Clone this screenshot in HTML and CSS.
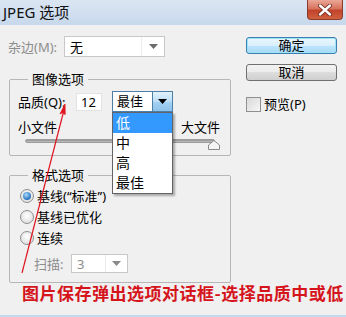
FILE: index.html
```html
<!DOCTYPE html>
<html lang="zh-CN">
<head>
    <meta charset="UTF-8">
    <title>JPEG 选项</title>
    <link rel="stylesheet" href="styles.css">
</head>
<body>

    <div class="titlebar">
        <span class="title">JPEG 选项</span>
        <span class="close-btn">
            <svg width="16" height="12" viewBox="0 0 16 12">
                <path d="M3 1.5 L13 10.5 M13 1.5 L3 10.5" stroke="#6b2418" stroke-width="4" stroke-linecap="round"/>
                <path d="M3 1.5 L13 10.5 M13 1.5 L3 10.5" stroke="#fff" stroke-width="2.4" stroke-linecap="round"/>
            </svg>
        </span>
    </div>

    <div class="dialog">
        <div class="columns">
            <div class="main">
                <div class="matte-row">
                    <span class="matte-label">杂边(M):</span>
                    <div class="combo matte-combo">
                        <span class="combo-text">无</span>
                        <span class="combo-arrow"><svg width="9" height="5" viewBox="0 0 9 5"><path d="M0 0 H9 L4.5 5 Z" fill="#6b6b6b"/></svg></span>
                    </div>
                </div>

                <!-- Image options -->
                <fieldset class="group image-group">
                    <legend>图像选项</legend>
                    <div class="quality-row">
                        <span class="quality-label">品质(Q):</span>
                        <span class="num-box">12</span>
                        <div class="quality-select">
                            <span class="qs-text">最佳</span>
                            <span class="qs-btn"><svg width="9" height="5" viewBox="0 0 9 5"><path d="M0 0 H9 L4.5 5 Z" fill="#000"/></svg></span>
                            <ul class="menu">
                                <li class="selected">低</li>
                                <li>中</li>
                                <li>高</li>
                                <li>最佳</li>
                            </ul>
                        </div>
                    </div>
                    <div class="size-labels">
                        <span>小文件</span>
                        <span>大文件</span>
                    </div>
                    <div class="slider">
                        <div class="track"></div>
                        <svg class="thumb" width="12" height="10" viewBox="0 0 12 10">
                            <path d="M0.5 9.5 V5 L6 0.5 L11.5 5 V9.5 Z" fill="#f4f4f4" stroke="#8a8a8a"/>
                        </svg>
                    </div>
                </fieldset>

                <!-- Format options -->
                <fieldset class="group format-group">
                    <legend>格式选项</legend>
                    <label class="radio-row"><span class="radio checked"></span>基线(“标准”)</label>
                    <label class="radio-row"><span class="radio"></span>基线已优化</label>
                    <label class="radio-row"><span class="radio"></span>连续</label>
                    <div class="scan-row">
                        <span class="scan-label">扫描:</span>
                        <div class="combo scan-combo">
                            <span class="combo-text">3</span>
                            <span class="combo-arrow"><svg width="9" height="5" viewBox="0 0 9 5"><path d="M0 0 H9 L4.5 5 Z" fill="#8a8a8a"/></svg></span>
                        </div>
                    </div>
                </fieldset>
            </div>

            <div class="side">
                <button class="btn btn-default">确定</button>
                <button class="btn">取消</button>
                <label class="check-row"><span class="check-box"></span>预览(P)</label>
            </div>
        </div>

        <p class="note">图片保存弹出选项对话框-选择品质中或低</p>
    </div>

    <div class="frame-bottom"></div>

    <!-- red pointer drawn over the dialog -->
    <svg class="pointer" width="346" height="317" viewBox="0 0 346 317">
        <line x1="22" y1="273" x2="64" y2="110" stroke="#e01520" stroke-width="1.2"/>
        <path d="M65 104 L60 114 L62.6 112.6 L65.2 114.6 Z" fill="#e01520" stroke="#e01520" stroke-width="0.8"/>
    </svg>

</body>
</html>
```

FILE: styles.css
```css
body {
    margin: 0;
    width: 346px;
    height: 317px;
    background-color: #f0f0f0;
    font-family: "Noto Sans", "Noto Sans CJK SC", sans-serif;
    font-size: 13px;
    line-height: 16px;
    color: #000;
    position: relative;
    overflow: hidden;
    display: flex;
    flex-direction: column;
}

/* Title bar */
.titlebar {
    height: 25px;
    flex-shrink: 0;
    display: flex;
    align-items: flex-start;
    background: linear-gradient(#dbe6f3, #c7d8ec);
}

.title {
    font-size: 15px;
    line-height: 24px;
    padding-left: 3px;
    color: #111;
}

.close-btn {
    margin-left: auto;
    margin-right: 3px;
    width: 36px;
    height: 20px;
    box-sizing: border-box;
    border: 1px solid #8b3b2d;
    border-top: none;
    border-radius: 0 0 4px 4px;
    background: linear-gradient(#eaa796, #d7735c 45%, #c2432b 55%, #d0603f);
    display: flex;
    justify-content: center;
    align-items: center;
}

/* Dialog body */
.dialog {
    padding: 11px 9px 0 9px;
}

.columns {
    display: flex;
}

.main {
    width: 222px;
}

.side {
    width: 91px;
    margin-left: 15px;
    padding-top: 1px;
    display: flex;
    flex-direction: column;
}

.matte-row {
    display: flex;
    align-items: center;
    height: 21px;
}

.matte-label {
    width: 56px;
    margin-left: -1px;
    color: #8d8d8d;
}

.combo {
    box-sizing: border-box;
    border: 1px solid #c8c8c8;
    background: #fff;
    display: flex;
    align-items: center;
}

.combo-text {
    flex: 1;
    padding-left: 5px;
}

.combo-arrow {
    width: 22px;
    height: 100%;
    border-left: 1px solid #ececec;
    display: flex;
    justify-content: center;
    align-items: center;
}

.matte-combo {
    width: 101px;
    height: 21px;
}

/* Group boxes */
.group {
    margin: 14px 0 0;
    padding: 0 8px;
    border: 1px solid #b6b6b6;
    border-radius: 2px;
    box-sizing: border-box;
    min-width: 0;
}

.group legend {
    margin-left: 10px;
    padding: 0 4px;
    line-height: 16px;
}

.image-group {
    height: 85px;
}

.format-group {
    margin-top: 11px;
    height: 116px;
}

.quality-row {
    display: flex;
    align-items: center;
    height: 21px;
    margin-top: 4px;
}

.quality-label {
    width: 58px;
}

.num-box {
    width: 26px;
    height: 18px;
    box-sizing: border-box;
    border: 1px solid #e2e2e2;
    background: #fff;
    padding-left: 4px;
    line-height: 16px;
}

.quality-select {
    position: relative;
    margin-left: 10px;
    width: 61px;
    height: 21px;
    box-sizing: border-box;
    border: 1px solid #4d7ea8;
    background: #fff;
    display: flex;
}

.qs-text {
    flex: 1;
    padding-left: 4px;
    line-height: 19px;
}

.qs-btn {
    width: 19px;
    border-left: 1px solid #4d7ea8;
    background: linear-gradient(#e3f2fc, #bcdff7 50%, #a4d2f3 50%, #8ec3ea);
    display: flex;
    justify-content: center;
    align-items: center;
}

.menu {
    position: absolute;
    top: 20px;
    left: -1px;
    width: 61px;
    margin: 0;
    padding: 0;
    list-style: none;
    background: #fff;
    border: 1px solid #646464;
    box-sizing: border-box;
    box-shadow: 2px 2px 2px rgba(0, 0, 0, 0.3);
    z-index: 3;
}

.menu li {
    height: 20px;
    line-height: 20px;
    padding-left: 3px;
    font-size: 14px;
}

.menu li.selected {
    background: #3399ff;
    color: #fff;
}

.size-labels {
    display: flex;
    justify-content: space-between;
    margin-top: 7px;
    padding-right: 2px;
}

.slider {
    position: relative;
    height: 12px;
}

.track {
    margin: 4px 7px 0;
    height: 4px;
    border-radius: 2px;
    background: linear-gradient(#8f8f8f, #c4c4c4);
    border: 1px solid #9c9c9c;
    box-sizing: border-box;
}

.thumb {
    position: absolute;
    left: 190px;
    top: 1px;
}

/* Radios */
.radio-row {
    display: flex;
    align-items: center;
    height: 21px;
}

.radio-row:first-of-type {
    margin-top: 2px;
}

.radio {
    width: 14px;
    height: 14px;
    margin-left: 2px;
    margin-right: 3px;
    border-radius: 50%;
    border: 1px solid #8e8f8f;
    box-sizing: border-box;
    background: radial-gradient(circle at 50% 40%, #ffffff, #d6d6d6);
    display: flex;
    justify-content: center;
    align-items: center;
}

.radio.checked::after {
    content: "";
    width: 8px;
    height: 8px;
    border-radius: 50%;
    background: radial-gradient(circle at 40% 35%, #a9dcf8, #2f78c4 65%, #17457f);
}

.scan-row {
    display: flex;
    align-items: center;
    margin-top: 6px;
    height: 19px;
}

.scan-label {
    margin-left: 16px;
    width: 37px;
    color: #8d8d8d;
}

.scan-combo {
    width: 57px;
    height: 19px;
    color: #8d8d8d;
}

.scan-combo .combo-arrow {
    width: 21px;
}

/* Buttons */
.btn {
    width: 91px;
    height: 17px;
    padding: 0;
    font-family: inherit;
    font-size: 13px;
    line-height: 15px;
    border: 1px solid #707070;
    border-radius: 3px;
    background: linear-gradient(#f2f2f2, #ebebeb 50%, #dddddd 50%, #cfcfcf);
    color: #000;
}

.btn-default {
    border-color: #3c7fb1;
    background: linear-gradient(#eaf6fd, #d9f0fc 50%, #bee6fd 50%, #a7d9f5);
    box-shadow: inset 0 0 0 1px #9fe3fb;
}

.btn + .btn {
    margin-top: 10px;
}

.check-row {
    display: flex;
    align-items: center;
    margin-top: 15px;
    height: 16px;
}

.check-box {
    width: 15px;
    height: 15px;
    box-sizing: border-box;
    border: 1px solid #8f8f8f;
    background: linear-gradient(135deg, #d8d8d8, #f7f7f7);
    margin-right: 3px;
}

/* Red annotation */
.note {
    margin: 0 0 0 13px;
    white-space: nowrap;
    font-size: 17px;
    letter-spacing: 0.5px;
    line-height: 20px;
    font-weight: bold;
    font-family: "Noto Sans CJK SC", sans-serif;
    color: #d5141c;
}

.frame-bottom {
    margin-top: auto;
    height: 2px;
    background: #c4d8ee;
}

.pointer {
    position: absolute;
    left: 0;
    top: 0;
    pointer-events: none;
}
```
